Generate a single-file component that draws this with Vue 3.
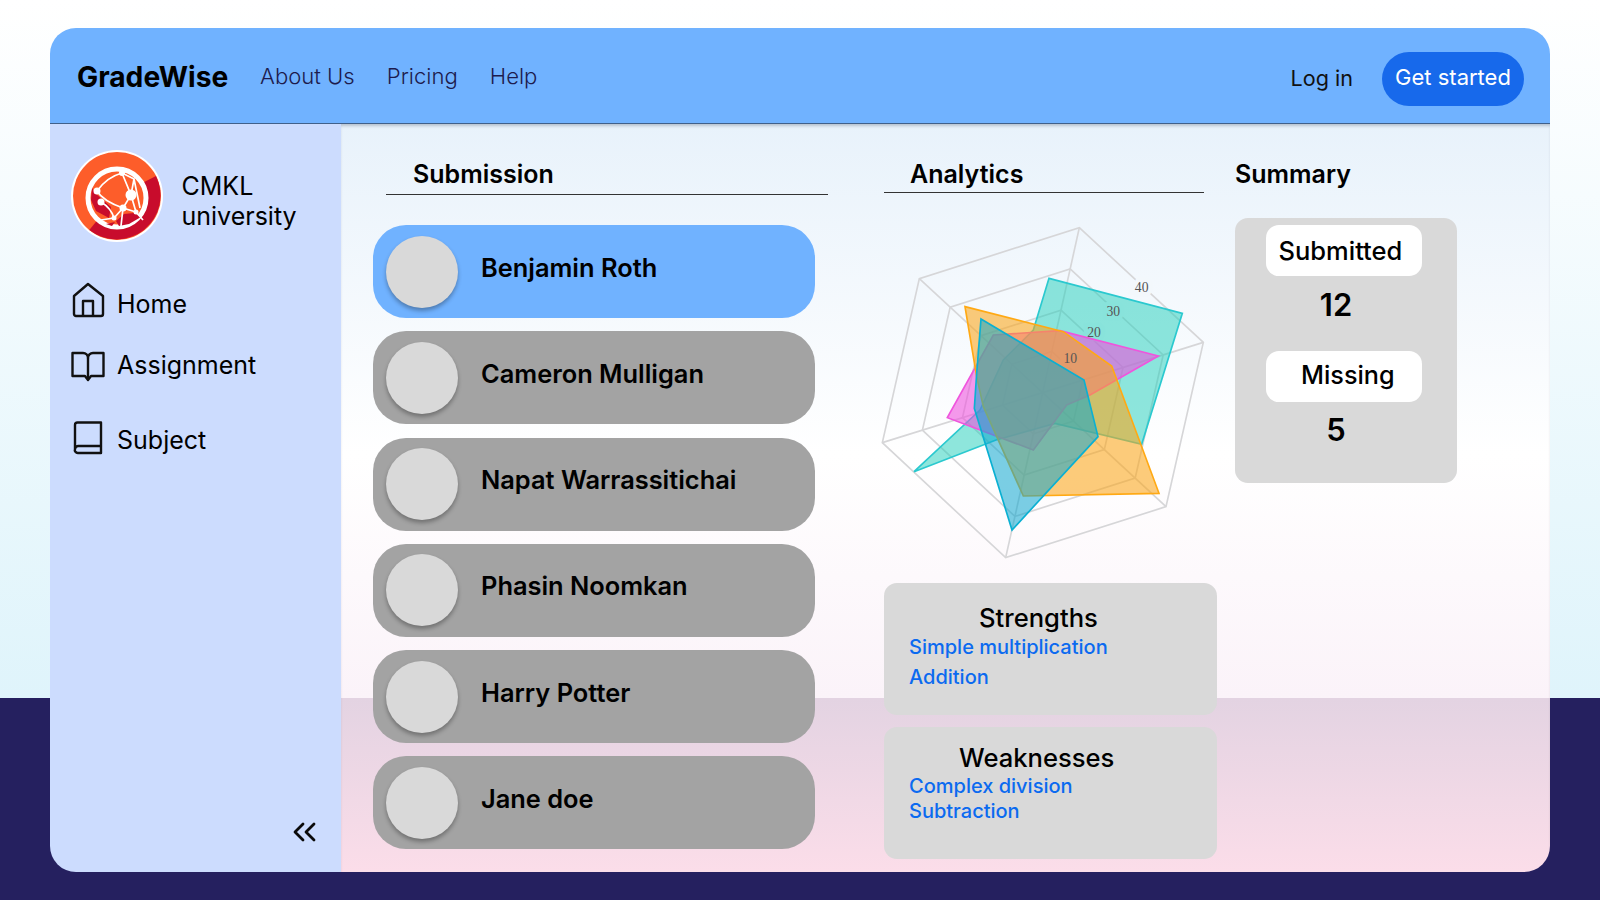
<script setup>
const students = ['Benjamin Roth', 'Cameron Mulligan', 'Napat Warrassitichai', 'Phasin Noomkan', 'Harry Potter', 'Jane doe']
const outer = [[658, 53], [1030, 397], [918, 890], [437, 1043], [67, 698], [178, 206]]
const c = 548
const ringPts = (k) => outer.map(([x, y]) => `${c + (x - c) * k},${c + (y - c) * k}`).join(' ')
const rings = [0.25, 0.5, 0.75, 1].map(ringPts)
const labels = [
  { t: '10', x: 631, y: 458 },
  { t: '20', x: 702, y: 380 },
  { t: '30', x: 760, y: 317 },
  { t: '40', x: 845, y: 246 }
]
const polys = [
  { cls: 'teal', pts: '567,205 967,310 845,703 585,640 408,690 162,785 360,600 430,450 520,360' },
  { cls: 'magenta', pts: '895,438 690,555 620,585 520,720 262,623 400,375 600,362' },
  { cls: 'orange', pts: '315,290 610,365 755,468 897,850 490,858 370,590 350,500' },
  { cls: 'blue', pts: '363,327 672,510 714,680 456,960 343,595 350,490' }
]
</script>

<template>
  <div class="page">
    <div class="shell">
      <header class="topbar">
        <div class="brand">GradeWise</div>
        <nav class="topnav">
          <a>About Us</a>
          <a>Pricing</a>
          <a>Help</a>
        </nav>
        <div class="actions">
          <a class="login">Log in</a>
          <button class="cta">Get started</button>
        </div>
      </header>
      <div class="body">
        <aside class="sidebar">
          <div class="org">
            <svg class="logo" viewBox="0 0 92 92" width="92" height="92">
              <circle cx="46" cy="46" r="46" fill="#fff" />
              <circle cx="46" cy="46" r="44" fill="#fd5d2a" />
              <path d="M46 46 L85 26 A44 44 0 0 1 18.3 80 Z" fill="#c80c2c" />
              <circle cx="46" cy="48" r="29" fill="#fd5d2a" stroke="#fff" stroke-width="5" />
              <path d="M21 38 L24 43 L40 57 L38 68 L25 61 L20 50 Z" fill="#c80c2c" />
              <path d="M45 71 L53 64 L63 63 L70 67 L58 74 L48 76 Z" fill="#c80c2c" />
              <path d="M35 74 L44 72 L41 76 Z" fill="#c80c2c" />
              <g stroke="#fff" stroke-width="1.7" fill="none">
                <path d="M26 41 Q36 27 51 23" />
                <path d="M51 23 L60 45 L52 58 L65 62 L60 45" />
                <path d="M51 23 L63 29 L60 45 M63 29 L69 58" />
                <path d="M26 41 Q32 51 52 58" />
                <path d="M30 52 Q40 58 43 68 L52 58 L50 76" />
                <path d="M43 68 L30 70 M65 62 L72 70" />
              </g>
              <g fill="#fff">
                <circle cx="26" cy="41" r="3.5" />
                <circle cx="30" cy="52" r="3.5" />
                <circle cx="51" cy="23" r="3" />
                <circle cx="60" cy="45" r="5.5" />
                <circle cx="52" cy="58" r="3.5" />
                <circle cx="65" cy="62" r="2.5" />
                <circle cx="43" cy="68" r="2.5" />
              </g>
            </svg>
            <div class="org-name">CMKL<br />university</div>
          </div>
          <nav class="sidenav">
            <a class="side-item home">
              <svg class="ico" width="34" height="36" viewBox="0 0 34 36" fill="none" stroke="#111" stroke-width="2.4" stroke-linejoin="round">
                <path d="M3 14 L17 2 L32 14 V32 a2 2 0 0 1 -2 2 H5 a2 2 0 0 1 -2 -2 Z" />
                <path d="M12 34 V19 H22 V34" />
              </svg>
              <span>Home</span>
            </a>
            <a class="side-item assign">
              <svg class="ico" width="34" height="32" viewBox="0 0 34 32" fill="none" stroke="#111" stroke-width="2.4" stroke-linejoin="round">
                <path d="M1.5 2 H12 a5 5 0 0 1 5 5 a5 5 0 0 1 5 -5 H32.5 V25 H20 L17 29 L14 25 H1.5 Z" />
                <path d="M17 7 V27" />
              </svg>
              <span>Assignment</span>
            </a>
            <a class="side-item subject">
              <svg class="ico" width="34" height="34" viewBox="0 0 34 34" fill="none" stroke="#111" stroke-width="2.4" stroke-linejoin="round">
                <path d="M4 28 V4 a2.5 2.5 0 0 1 2.5 -2.5 H30 V32 H7 a3 3 0 0 1 -3 -4 a3.5 3.5 0 0 1 3 -3 H30" />
              </svg>
              <span>Subject</span>
            </a>
          </nav>
          <svg class="collapse" width="23" height="20" viewBox="0 0 23 20" fill="none" stroke="#0a0a0a" stroke-width="2.8" stroke-linecap="round" stroke-linejoin="round">
            <path d="M10 2 L2 10 L10 18" />
            <path d="M21 2 L13 10 L21 18" />
          </svg>
        </aside>
        <main class="content">
          <section class="col-sub">
            <h2 class="heading sub-head">Submission</h2>
            <ul class="students">
              <li v-for="(s, i) in students" :key="s" class="student" :class="{ active: i === 0 }">
                <span class="avatar"></span>
                <span class="name">{{ s }}</span>
              </li>
            </ul>
          </section>
          <section class="col-ana">
            <h2 class="heading ana-head">Analytics</h2>
            <svg class="radar" width="360" height="360" viewBox="0 0 1080 1080">
              <g fill="none" stroke="#d6d6d8" stroke-width="5">
                <polygon v-for="(r, i) in rings" :key="i" :points="r" />
                <line v-for="(p, i) in outer" :key="'s' + i" :x1="c" :y1="c" :x2="p[0]" :y2="p[1]" />
              </g>
              <text v-for="l in labels" :key="'h' + l.t" :x="l.x" :y="l.y" class="halo">{{ l.t }}</text>
              <polygon v-for="p in polys" :key="p.cls" :points="p.pts" :class="p.cls" />
              <text v-for="l in labels" :key="l.t" :x="l.x" :y="l.y" class="tick">{{ l.t }}</text>
            </svg>
            <div class="panel strengths">
              <h3>Strengths</h3>
              <p>Simple multiplication</p>
              <p>Addition</p>
            </div>
            <div class="panel weaknesses">
              <h3>Weaknesses</h3>
              <p>Complex division</p>
              <p>Subtraction</p>
            </div>
          </section>
          <section class="col-sum">
            <h2 class="heading sum-head">Summary</h2>
            <div class="summary">
              <div class="pill submitted">Submitted</div>
              <div class="count first">12</div>
              <div class="pill missing">Missing</div>
              <div class="count">5</div>
            </div>
          </section>
        </main>
      </div>
    </div>
  </div>
</template>

<style>
html, body { margin: 0; overflow: hidden; }
</style>

<style scoped>
* { box-sizing: border-box; }
.page {
  width: 1600px;
  height: 900px;
  padding: 28px 50px;
  font-family: Inter, "Liberation Sans", sans-serif;
  color: #000;
  background: linear-gradient(#ffffff 0, #dff4fb 698px, #25205f 698px);
}
.shell {
  width: 1500px;
  height: 844px;
  border-radius: 26px;
  overflow: hidden;
  display: flex;
  flex-direction: column;
}
.topbar {
  flex: none;
  height: 96px;
  background: #70b2ff;
  border-bottom: 1px solid #40608a;
  display: flex;
  align-items: center;
  padding: 0 26px 0 27px;
}
.brand { font-size: 28.2px; font-weight: 700; width: 151px; margin-top: 2px; }
.topnav { display: flex; gap: 32px; margin-left: 32px; font-size: 22.1px; font-weight: 300; color: #1d1b4d; }
.actions { margin-left: auto; display: flex; align-items: center; gap: 29px; margin-top: 6px; }
.login { font-size: 21.6px; font-weight: 400; color: #111; margin-bottom: 2px; }
.cta {
  width: 142px;
  height: 54px;
  border: 0;
  border-radius: 27px;
  background: #1769eb;
  color: #fff;
  font: 400 22px Inter, "Liberation Sans", sans-serif;
  padding: 0 0 3px;
}
.body { flex: 1; display: flex; min-height: 0; }
.sidebar {
  flex: none;
  width: 291px;
  background: #ccdcfe;
  display: flex;
  flex-direction: column;
  padding: 26px 25px 30px 20.5px;
}
.org { display: flex; align-items: center; gap: 19px; }
.logo { flex: none; }
.org-name { font-size: 25px; line-height: 30.5px; font-weight: 400; margin-top: 10px; }
.sidenav { display: flex; flex-direction: column; margin-top: 44px; }
.side-item { display: flex; align-items: center; gap: 12.5px; height: 36px; font-size: 25px; }
.assign { margin-top: 25px; }
.subject { margin-top: 39px; }
.home .ico { margin-bottom: 8px; }
.assign .ico { margin-top: 4px; }
.subject .ico { margin-bottom: 5px; }
.collapse { margin-top: auto; align-self: flex-end; }
.content {
  flex: 1;
  display: grid;
  grid-template-columns: 455px 390px 240px;
  column-gap: 0;
  padding: 0 0 0 32px;
  background: linear-gradient(#e8f2fb 0, #ffffff 330px, #fbf3f9 574px, #e3d3e2 574px, #fbdde9 747px);
  box-shadow: inset 0 3px 3px -1px rgba(40, 50, 80, 0.25);
}
.col-sub { padding-top: 32px; }
.col-ana { margin-left: 56px; padding-top: 32px; }
.col-sum { margin-left: 17px; padding-top: 32px; width: 222px; }
.heading { margin: 0; font-size: 25px; font-weight: 600; line-height: 36px; }
.sub-head { margin-left: 13px; padding-left: 27px; padding-bottom: 2px; border-bottom: 1px solid #333; width: 442px; height: 39px; }
.ana-head { padding-left: 26px; border-bottom: 1px solid #333; width: 320px; height: 37px; }
.sum-head { height: 36px; }
.students { list-style: none; margin: 30px 0 0; padding: 0; display: flex; flex-direction: column; gap: 13.3px; width: 442px; }
.student {
  height: 93px;
  background: #a3a3a3;
  border-radius: 33px;
  display: flex;
  align-items: center;
  padding-left: 13px;
}
.student.active { background: #70b2ff; }
.avatar { flex: none; width: 72px; height: 72px; border-radius: 50%; background: #d9d9d9; box-shadow: 0 3px 4px rgba(0, 0, 0, 0.3); }
.name { margin-left: 23px; margin-bottom: 9px; font-size: 25.4px; font-weight: 600; }
.radar { display: block; margin: 17px 0 0 -24px; }
.radar .halo { font-family: "Liberation Serif", serif; font-size: 41px; text-anchor: middle; fill: none; stroke: #f3f8fc; stroke-width: 26px; }
.radar .tick { font-family: "Liberation Serif", serif; font-size: 41px; text-anchor: middle; fill: #555; }
.radar .teal { fill: rgba(29, 205, 185, 0.5); stroke: #2bc9cf; stroke-width: 5; }
.radar .magenta { fill: rgba(238, 80, 220, 0.58); stroke: #ef55dd; stroke-width: 5; }
.radar .orange { fill: rgba(250, 165, 25, 0.58); stroke: #ffa914; stroke-width: 5; }
.radar .blue { fill: rgba(12, 165, 205, 0.55); stroke: #0bb0d2; stroke-width: 5; }
.panel { background: #d9d9d9; border-radius: 13px; width: 333px; height: 132px; margin-top: 12px; padding-left: 25px; }
.strengths { margin-top: 13px; padding-top: 20px; }
.weaknesses { padding-top: 16px; }
.panel h3 { margin: 0; font-size: 25.6px; font-weight: 500; line-height: 30px; }
.strengths h3 { padding-left: 70px; }
.weaknesses h3 { padding-left: 50px; margin-bottom: 1px; }
.panel p { margin: 0; color: #0b6af0; font-size: 20px; font-weight: 500; }
.strengths p { line-height: 30px; }
.strengths h3 + p { margin-top: -1px; }
.weaknesses p { line-height: 25px; }
.summary {
  margin-top: 26px;
  width: 222px;
  height: 265px;
  background: #d9d9d9;
  border-radius: 13px;
  padding: 7px 0 0 31px;
}
.pill { width: 156px; height: 51px; background: #fff; border-radius: 13px; display: flex; align-items: center; font-size: 25.5px; font-weight: 500; }
.submitted { padding-left: 12.5px; }
.missing { padding: 0 0 4px 35px; font-size: 25.2px; }
.count { width: 140px; text-align: center; font-size: 31px; font-weight: 600; height: 75px; line-height: 56px; }
.count.first { height: 75px; line-height: 58px; }
</style>
